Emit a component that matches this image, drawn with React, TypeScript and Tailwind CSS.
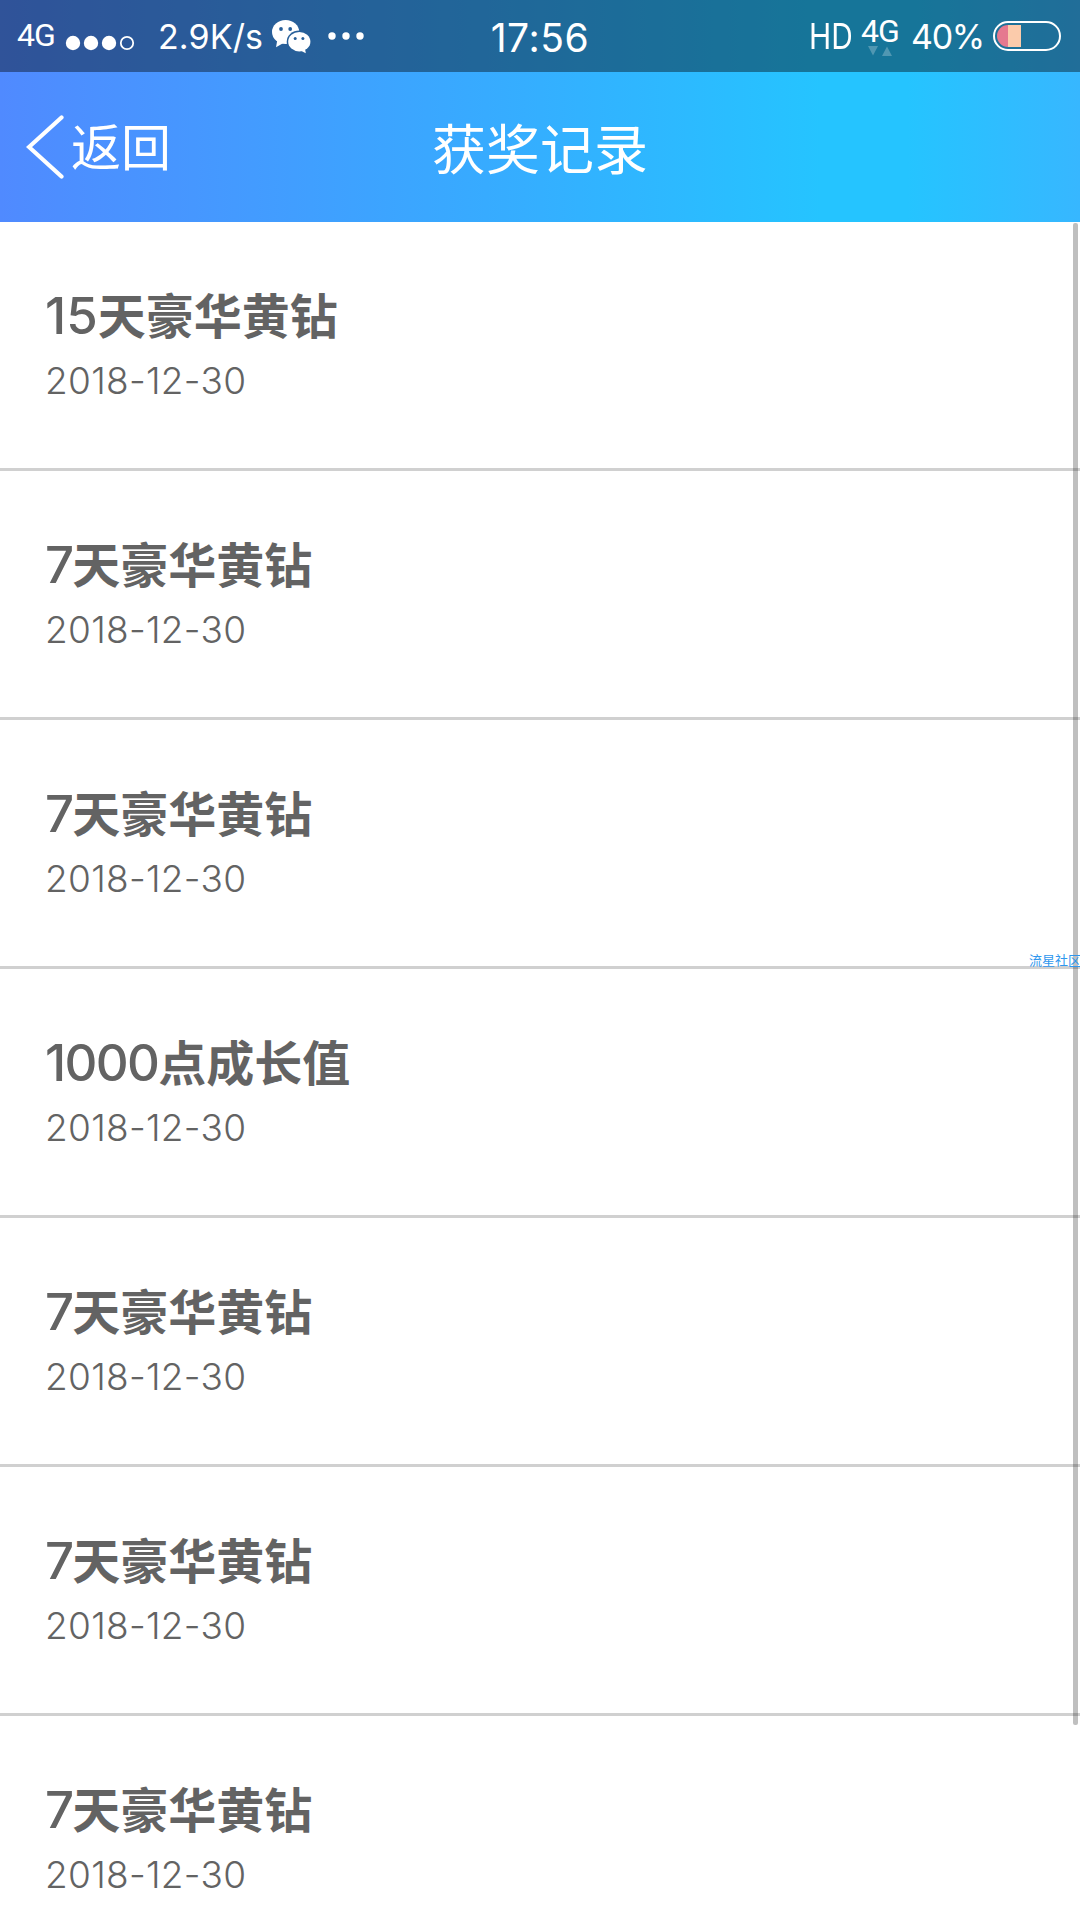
import React from "react";
import clsx from "clsx";

interface Award {
  id: number;
  amount: string;
  name: string;
  date: string;
}

const awards: Award[] = [
  { id: 1, amount: "15", name: "天豪华黄钻", date: "2018-12-30" },
  { id: 2, amount: "7", name: "天豪华黄钻", date: "2018-12-30" },
  { id: 3, amount: "7", name: "天豪华黄钻", date: "2018-12-30" },
  { id: 4, amount: "1000", name: "点成长值", date: "2018-12-30" },
  { id: 5, amount: "7", name: "天豪华黄钻", date: "2018-12-30" },
  { id: 6, amount: "7", name: "天豪华黄钻", date: "2018-12-30" },
  { id: 7, amount: "7", name: "天豪华黄钻", date: "2018-12-30" },
];

const SignalDots: React.FC = () => (
  <svg className="w-[70px] h-4 shrink-0" viewBox="0 0 70 16" fill="none">
    <circle cx="8" cy="8" r="7.2" fill="white" />
    <circle cx="26" cy="8" r="7.2" fill="white" />
    <circle cx="44" cy="8" r="7.2" fill="white" />
    <circle cx="62" cy="8" r="6.2" stroke="white" strokeWidth="1.8" />
  </svg>
);

const WechatIcon: React.FC = () => (
  <svg className="w-[39px] h-[34px] shrink-0" viewBox="0 0 39 34">
    <mask id="bubble-gap">
      <rect width="39" height="34" fill="white" />
      <ellipse cx="27.3" cy="21.7" rx="12.6" ry="11.2" fill="black" />
      <circle cx="9" cy="9" r="1.9" fill="black" />
      <circle cx="18.2" cy="9" r="1.9" fill="black" />
    </mask>
    <g mask="url(#bubble-gap)" fill="white">
      <ellipse cx="13.6" cy="12" rx="13.6" ry="12" />
      <path d="M5.5 19 4 27.2l7-4z" />
    </g>
    <mask id="bubble-eyes">
      <rect width="39" height="34" fill="white" />
      <circle cx="23.2" cy="18.6" r="1.5" fill="black" />
      <circle cx="30.9" cy="18.6" r="1.5" fill="black" />
    </mask>
    <g mask="url(#bubble-eyes)" fill="white">
      <ellipse cx="27.3" cy="21.7" rx="11.1" ry="9.7" />
      <path d="M28.5 30.5 33.8 33.2 33 28.5z" />
    </g>
  </svg>
);

const BatteryIcon: React.FC = () => (
  <svg className="w-[68px] h-[30px] shrink-0" viewBox="0 0 68 30" fill="none">
    <path d="M15 4v22a11 11 0 0 1 0-22z" fill="#e5798f" />
    <rect x="15" y="4" width="13" height="22" fill="#fbcbab" />
    <rect x="1" y="1" width="66" height="28" rx="14" stroke="white" strokeWidth="2" />
  </svg>
);

const StatusBar: React.FC = () => (
  <div className="grid h-[72px] grid-cols-[1fr_auto_1fr] bg-black/40">
    <div className="flex items-start">
      <span className="ml-[17px] mt-[19px] w-[48px] text-[32px] leading-[33px] tracking-[-1px] font-[Roboto]">
        4G
      </span>
      <span className="mt-[35px] flex">
        <SignalDots />
      </span>
      <span className="ml-[23px] mt-[17px] w-[106px] text-[34px] leading-[40px] tracking-[0.1px]">
        2.9K/s
      </span>
      <span className="ml-[8px] mt-[20px] flex">
        <WechatIcon />
      </span>
      <svg className="ml-[17px] mt-[32px] h-2 w-9" viewBox="0 0 36 8" fill="white">
        <circle cx="4" cy="4" r="3.7" />
        <circle cx="18" cy="4" r="3.7" />
        <circle cx="32" cy="4" r="3.7" />
      </svg>
    </div>
    <div className="mt-[17px] text-[39px] leading-[42px] tracking-[0.6px]">17:56</div>
    <div className="flex items-start justify-end">
      <span className="mt-[15px] w-[52px] origin-left scale-x-[.83] text-[36px] leading-[42px]">HD</span>
      <div className="flex w-[50px] flex-col">
        <span className="mt-[15px] text-[32px] leading-[32px] tracking-[-1px] font-[Roboto]">4G</span>
        <svg className="ml-[7px] -mt-px h-[10px] w-6" viewBox="0 0 24 10" fill="white" fillOpacity=".25">
          <path d="M0 0h10L5 9.5zM14 10h10l-5-9.5z" />
        </svg>
      </div>
      <span className="mt-[17px] w-[73px] text-[34px] leading-[40px] tracking-[-1.3px]">40%</span>
      <span className="ml-[9px] mr-[19px] mt-[21px] flex">
        <BatteryIcon />
      </span>
    </div>
  </div>
);

const NavBar: React.FC = () => (
  <div className="grid h-[150px] grid-cols-[1fr_auto_1fr] items-center">
    <button type="button" className="flex items-center pl-[26px] text-left">
      <svg className="h-[66px] w-[39px]" viewBox="0 0 39 66" fill="none">
        <path d="M35.5 3.5 3 33l32.5 29.5" stroke="white" strokeWidth="4.2" strokeLinecap="round" />
      </svg>
      <span className="ml-[6px] mt-[2px] text-[50px] leading-[60px]">返回</span>
    </button>
    <h1 className="mt-[8px] text-[54px] leading-[64px]">获奖记录</h1>
  </div>
);

const AwardRow: React.FC<{ award: Award }> = ({ award }) => (
  <li className="h-[249px] border-b-3 border-[#d0d0d0] pl-[45px] pt-[61px]">
    <h2 className="flex h-[66px] items-baseline">
      <span
        className={clsx(
          "text-[51px] leading-[66px] font-medium",
          award.amount.length === 1 && "tracking-[-2px]",
          award.amount.length === 2 && "tracking-[0px]",
          award.amount.length > 2 && "tracking-[-1.7px]"
        )}
      >
        {award.amount}
      </span>
      <span className="text-[48px] leading-[66px] font-bold">{award.name}</span>
    </h2>
    <p className="mt-[9px] text-[37px] leading-[46px] font-light tracking-[0.3px]">{award.date}</p>
  </li>
);

const App: React.FC = () => {
  return (
    <div className="relative h-[1920px] w-[1080px] overflow-hidden bg-white font-['Inter','Noto_Sans_CJK_SC',sans-serif]">
      <header className="bg-[linear-gradient(90deg,#508aff_0%,#37abff_45%,#25c4ff_76%,#25c4ff_84%,#37b7ff_100%)] text-white">
        <StatusBar />
        <NavBar />
      </header>
      <ul className="text-[#636363]">
        {awards.map((award) => (
          <AwardRow key={award.id} award={award} />
        ))}
      </ul>

      {/* scroll thumb */}
      <div className="absolute right-[2px] top-[223px] h-[1502px] w-[5px] rounded-xs bg-black/25" />
      <span className="absolute left-[1029px] top-[950px] whitespace-nowrap text-[13px] leading-5 text-[#2f97ee]">
        流星社区
      </span>
    </div>
  );
};

export default App;
